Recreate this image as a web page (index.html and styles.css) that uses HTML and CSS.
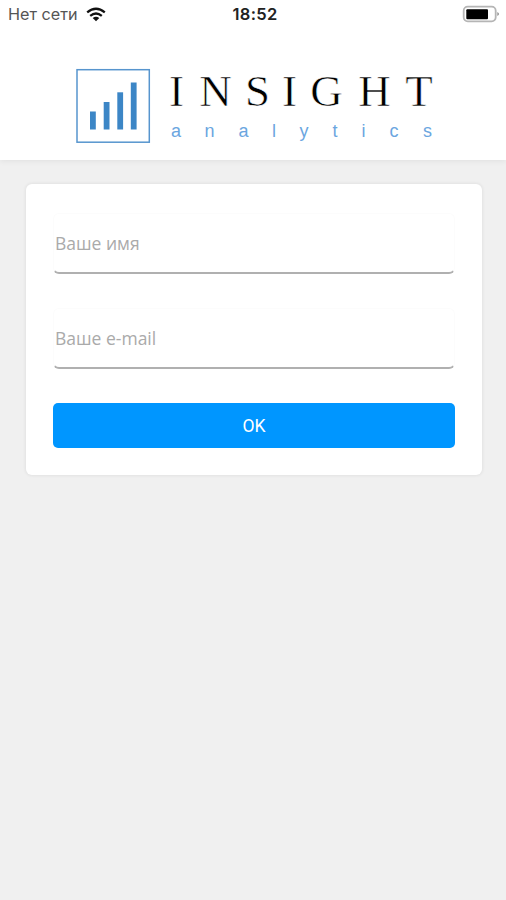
FILE: index.html
```html
<!DOCTYPE html>
<html lang="ru">
<head>
<meta charset="utf-8">
<title>Insight analytics</title>
<link rel="stylesheet" href="styles.css">
</head>
<body>
<header class="header">
  <div class="status">
    <div class="network">
      <span>Нет сети</span>
      <svg class="wifi" width="20" height="15" viewBox="0 0 20 15" fill="none" stroke="#111" stroke-width="2.3">
        <path d="M1.2 5.4Q10 -1.8 18.8 5.4"/>
        <path d="M4.2 8.8Q10 4.2 15.8 8.8"/>
        <path d="M6.7 11.1Q10 8.2 13.3 11.1L10 14.2Z" fill="#111" stroke="none"/>
      </svg>
    </div>
    <time class="time">18:52</time>
    <svg class="battery" width="38" height="18" viewBox="0 0 38 18">
      <rect x="1.7" y="1.7" width="32" height="14.6" rx="4" fill="#fff" stroke="#b5b5b5" stroke-width="1.8"/>
      <rect x="4.3" y="4.2" width="21.7" height="10" rx="1" fill="#000"/>
      <path d="M35.4 7Q38.5 9 35.4 11Z" fill="#888"/>
    </svg>
  </div>
  <svg class="logo" width="366" height="80" viewBox="72 66 366 80">
    <rect x="77" y="69.7" width="72.3" height="72.5" fill="#fff" stroke="#5795ce" stroke-width="1.5"/>
    <g fill="#3c86c6">
      <rect x="90" y="111.5" width="5.8" height="18"/>
      <rect x="103.7" y="102" width="5.8" height="27.5"/>
      <rect x="117.3" y="92.3" width="5.8" height="37.2"/>
      <rect x="130.8" y="82.5" width="5.8" height="47"/>
    </g>
    <text class="brand" y="106.3" x="176.5 215.5 257.5 289.5 326.5 374.5 419">INSIGHT</text>
    <text class="sub" y="136.8" x="176 209.5 243.5 274 304 335 363.5 394 427.5">analytics</text>
  </svg>
</header>
<main class="card">
  <input class="field" type="text" placeholder="Ваше имя">
  <input class="field" type="email" placeholder="Ваше e-mail">
  <button class="submit">OK</button>
</main>
</body>
</html>
```
FILE: styles.css
```css
* { box-sizing: border-box; }
body {
  margin: 0;
  min-height: 900px;
  background: #f0f0f0;
  font-family: "Open Sans", "Noto Sans", sans-serif;
}
.header {
  height: 160px;
  background: #fff;
  box-shadow: 0 1px 6px rgba(0, 0, 0, .07);
}
.status {
  display: grid;
  grid-template-columns: 1fr auto 1fr;
  align-items: center;
  height: 28px;
  padding: 0 6px 0 8px;
  font: 16.2px/28px Inter, sans-serif;
  color: #555;
}
.network { display: flex; align-items: center; gap: 8px; }
.time { padding-left: 2px; font-size: 16.5px; font-weight: 600; color: #222; letter-spacing: .3px; }
.battery { justify-self: end; }
.logo { display: block; margin: 38px 0 0 72px; }
.brand {
  font: 45px "Liberation Serif", serif;
  fill: #000;
  stroke: #fff;
  stroke-width: .6px;
  text-anchor: middle;
}
.sub {
  font: 18px "Liberation Sans", sans-serif;
  fill: #6ba6df;
  text-anchor: middle;
}
.card {
  display: flex;
  flex-direction: column;
  width: 456px;
  height: 291px;
  margin: 24px 0 0 26px;
  padding: 29px 27px 27px;
  background: #fff;
  border-radius: 6px;
  box-shadow: 0 0 3px 1px rgba(0, 0, 0, .06);
}
.field {
  flex: none;
  width: 402px;
  height: 61px;
  margin: 0 0 34px;
  padding: 0 1px;
  border: 1px solid #fcfcfc;
  border-bottom: 2px solid #b0b0b0;
  border-radius: 6px;
  background: #fff;
  font: 17.5px "Open Sans", sans-serif;
  outline: 0;
}
.field::placeholder { color: #aaa; opacity: 1; }
.submit {
  flex: none;
  height: 45px;
  padding: 0;
  border: 0;
  border-radius: 5px;
  background: #0096ff;
  color: #fff;
  font: 17.5px Roboto, sans-serif;
}
```
